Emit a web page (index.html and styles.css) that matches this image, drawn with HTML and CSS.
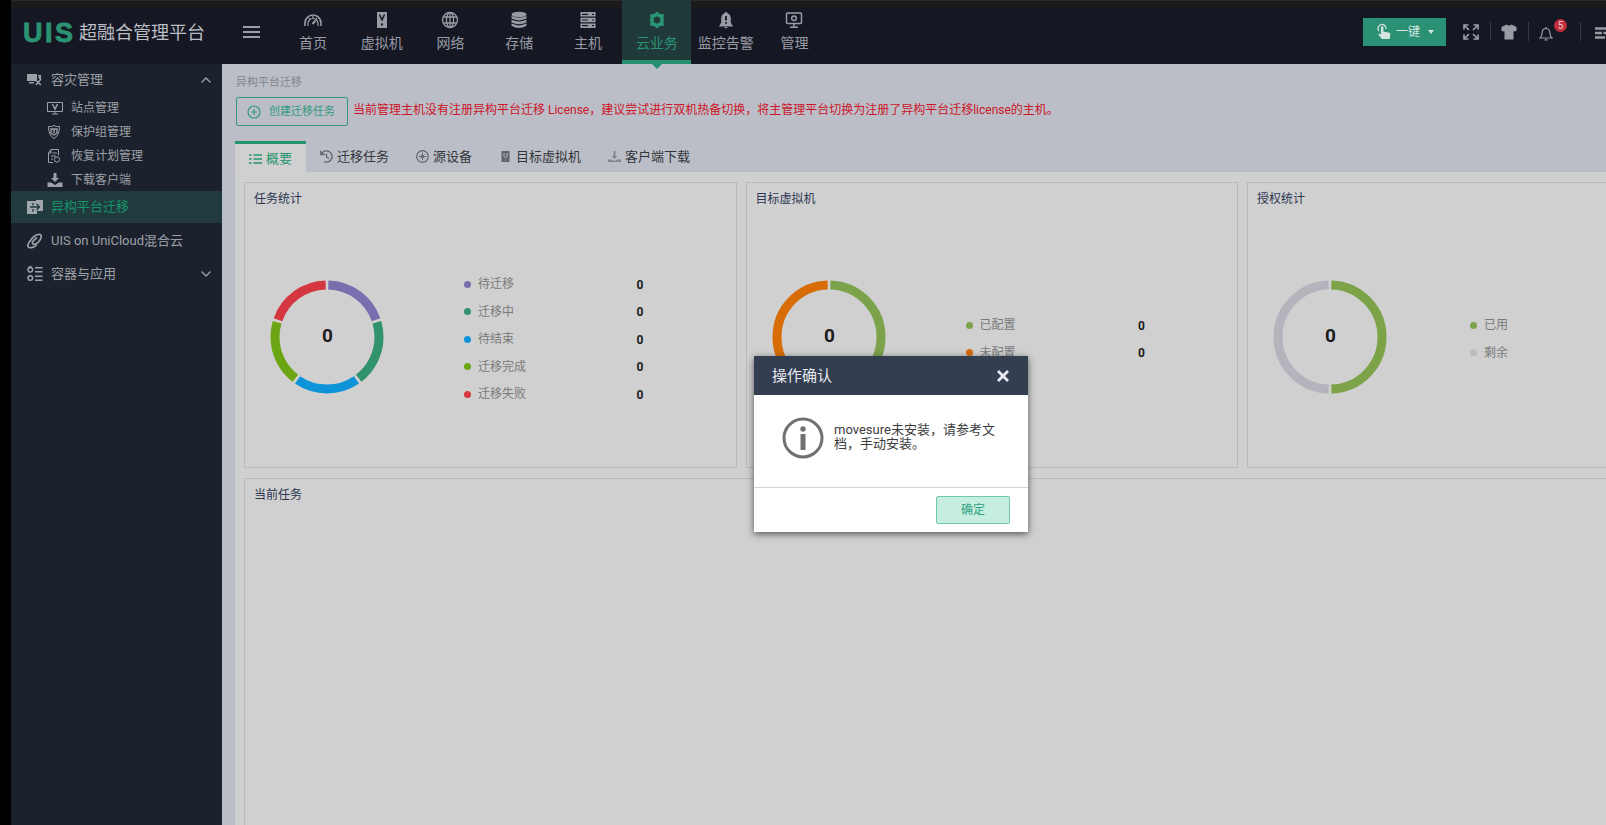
FILE: index.html
```html
<!DOCTYPE html>
<html lang="zh-CN">
<head>
    <meta charset="UTF-8">
    <meta name="viewport" content="width=device-width, initial-scale=1.0">
    <title>UIS 超融合管理平台</title>
    <link rel="stylesheet" href="styles.css">
</head>
<body>
    <header class="topbar">
        <div class="logo"><span class="logo-mark">UIS</span><span class="logo-name">超融合管理平台</span></div>
        <div class="menu-toggle"><i></i><i></i><i></i></div>
        <nav class="main-nav">
            <a class="nav-item">
                <svg width="20" height="16" viewBox="0 0 20 16" fill="none" stroke="currentColor"><path d="M2 14V11a8 8 0 0 1 16 0v3" stroke-width="1.6"/><path d="M5 14v-2.500a5 5 0 0 1 10 0V14M6 6l1.500 2M10 4v2M14 6l-1.500 2" stroke-width="1.200"/><path d="M9.500 12L12.500 8.500" stroke-width="2"/></svg>
                首页
            </a>
            <a class="nav-item">
                <svg width="16" height="18" viewBox="0 0 16 18"><path fill="currentColor" d="M3 1h10v16H3z"/><path d="M5.500 3.500L8 9l2.500-5.500" fill="none" stroke="#151823" stroke-width="1.500"/><path fill="#151823" d="M7 12.500h2v2H7z"/></svg>
                虚拟机
            </a>
            <a class="nav-item">
                <svg width="18" height="18" viewBox="0 0 18 18" fill="none" stroke="currentColor" stroke-width="1.300"><circle cx="9" cy="9" r="7.500"/><ellipse cx="9" cy="9" rx="3.600" ry="7.500"/><path d="M2.500 6h13M2.500 12h13M9 1.500v15"/></svg>
                网络
            </a>
            <a class="nav-item">
                <svg width="18" height="18" viewBox="0 0 18 18" fill="currentColor"><ellipse cx="9" cy="3.500" rx="7.500" ry="2.700"/><path d="M1.500 5q7.500 3.600 15 0v2.600q-7.500 3.600-15 0zM1.500 8.800q7.500 3.600 15 0v2.600q-7.500 3.600-15 0zM1.500 12.600q7.500 3.600 15 0v2.200q-7.500 4.400-15 0z"/></svg>
                存储
            </a>
            <a class="nav-item">
                <svg width="18" height="18" viewBox="0 0 18 18"><path fill="currentColor" d="M1.500 1h15v4.600h-15zM1.500 6.700h15v4.600h-15zM1.500 12.400h15V17h-15z"/><path stroke="#151823" stroke-width="1.200" d="M3 3.300h6M3 9h6M3 14.700h6M13 3.300h2M13 9h2M13 14.700h2"/></svg>
                主机
            </a>
            <a class="nav-item active">
                <svg width="18" height="18" viewBox="0 0 18 18"><path fill="currentColor" fill-rule="evenodd" d="M9 .5l2.600 2.300 4.400.7-.6 4L16.500 9l-1.100 1.500.6 4-4.400.7L9 17.500l-2.600-2.300-4.400-.7.600-4L1.500 9l1.100-1.500-.6-4 4.400-.7zM9 5.200L5.800 7v4L9 12.800l3.200-1.800V7z"/></svg>
                云业务
            </a>
            <a class="nav-item">
                <svg width="18" height="18" viewBox="0 0 18 18"><path fill="currentColor" d="M9 1a2 2 0 0 1 1.800 1.600C13 3.500 13.800 5.500 13.800 8v3.500l2.200 4H2l2.200-4V8c0-2.500.8-4.500 3-5.400A2 2 0 0 1 9 1zM7 16h4L9 17.500z"/><path d="M9 5v4.500M9 11v1.800" stroke="#151823" stroke-width="1.800"/></svg>
                监控告警
            </a>
            <a class="nav-item">
                <svg width="18" height="18" viewBox="0 0 18 18" fill="none" stroke="currentColor" stroke-width="1.500"><rect x="1.500" y="2" width="15" height="10.500" rx="1"/><circle cx="9" cy="7.200" r="2.300"/><path d="M9 12.500V16M5 16.200h8"/></svg>
                管理
            </a>
        </nav>
        <div class="tools">
            <button class="quick-btn">
                <svg width="14" height="17" viewBox="0 0 14 17"><path d="M2 8a4 4 0 1 1 7-2" fill="none" stroke="currentColor" stroke-width="1.300"/><path fill="currentColor" d="M4 4q1.200-1.300 2.400 0v4.500l6 1.200q1 .4.900 1.400l-.6 5H4.800L1.200 11.500q.6-1.300 2.800 0z"/></svg>
                一键
                <span class="caret"></span>
            </button>
            <svg class="tool-expand" width="16" height="16" viewBox="0 0 16 16" fill="none" stroke="currentColor" stroke-width="1.700"><path d="M1 5.500V1h4.500M10.500 1H15v4.500M15 10.500V15h-4.500M5.500 15H1v-4.500M1.500 1.500l4.500 4.500M14.500 1.500L10 6M14.500 14.500L10 10M1.500 14.500L6 10"/></svg>
            <span class="divider"></span>
            <svg class="tool-shirt" width="16" height="16" viewBox="0 0 16 16"><path fill="currentColor" d="M5.500.5q2.500 1.800 5 0L15.500 3v4L12.500 7.500V15.500h-9v-8L.5 7V3z"/></svg>
            <span class="divider"></span>
            <div class="tool-bell">
                <svg width="14" height="15" viewBox="0 0 14 15" fill="none" stroke="currentColor" stroke-width="1.200"><path d="M7 1v1.500M1 12h12q-2-1.500-2-4.500C11 4.500 9.500 2.500 7 2.500S3 4.500 3 7.500Q3 10.500 1 12zM5.500 13.800h3"/></svg>
                <span class="badge">5</span>
            </div>
            <span class="divider"></span>
            <svg class="tool-list" width="16" height="12" viewBox="0 0 16 12" stroke="currentColor" stroke-width="2.400"><path d="M0 1.500h16M0 6h7M8.500 6H16M0 10.500h10M11.500 10.500H16"/></svg>
        </div>
    </header>

    <div class="layout">
        <aside class="sidebar">
            <div class="side-item side-group">
                <svg width="16" height="14" viewBox="0 0 16 14"><path fill="currentColor" d="M0 1h10v7H0zM2 9h5v1.500H2zM11 2h3v4h-2z"/><path d="M7 6l7 6M9 12l5-6" stroke="currentColor" stroke-width="1.500"/></svg>
                容灾管理
                <svg class="chevron" width="10" height="6" viewBox="0 0 10 6" fill="none" stroke="currentColor" stroke-width="1.300"><path d="M.5 5.500L5 1l4.500 4.500"/></svg>
            </div>
            <div class="side-sub">
                <svg width="16" height="14" viewBox="0 0 16 14" fill="none" stroke="currentColor"><path d="M.5 1.500h15v9H.5zM5 13h6M8 10.500V13"/><path d="M5.500 3L8 8l2.500-5" stroke-width="1.500"/></svg>
                站点管理
            </div>
            <div class="side-sub">
                <svg width="16" height="14" viewBox="0 0 16 14" fill="none" stroke="currentColor"><path d="M1.500 1.500Q5 2 7 .5q2 1.500 5.500 1 0 9-5.500 12-5.500-3-5.500-12z"/><path d="M4 4h6v4l-3 2-3-2zM7 4v4" stroke-width="1.400"/></svg>
                保护组管理
            </div>
            <div class="side-sub">
                <svg width="16" height="14" viewBox="0 0 16 14" fill="none" stroke="currentColor"><path d="M6 13.500H1.500V4L4 .5h7.500v6M4 .5V4H1.500M5.500 4H10M4 7h5M4 10h2"/><circle cx="10" cy="10.500" r="2.600"/></svg>
                恢复计划管理
            </div>
            <div class="side-sub">
                <svg width="16" height="14" viewBox="0 0 16 14"><path fill="currentColor" d="M6.500 0h3v5H12L8 9 4 5h2.500zM.5 9.500H4L8 12l4-2.500h3.500V14H.5z"/></svg>
                下载客户端
            </div>
            <div class="side-item side-active">
                <svg width="16" height="16" viewBox="0 0 16 16"><path fill="currentColor" d="M0 2h9v-1h7v11h-6v3H0z"/><path d="M3 8h9M9.500 5l3 3-3 3M6 4v2.500M6 10v3" fill="none" stroke="#203a3d" stroke-width="1.300"/></svg>
                异构平台迁移
            </div>
            <div class="side-item side-cloud">
                <svg width="16" height="16" viewBox="0 0 16 16" fill="none" stroke="currentColor" stroke-width="1.700"><path d="M3 8.500C5 4 10 .5 13.500 1.500c2 2.500-1 8-5 9.500-3 1-4-1-2-3.500l3.500-3"/><path d="M3.500 7.500C1 10 0 13 2 14.500c3 .8 6-.8 8-3"/></svg>
                UIS on UniCloud混合云
            </div>
            <div class="side-item side-apps">
                <svg width="16" height="16" viewBox="0 0 16 16" fill="none" stroke="currentColor" stroke-width="1.500"><circle cx="3.300" cy="3.800" r="2.300"/><circle cx="3.300" cy="12" r="2.300"/><path d="M1.500 1L5 1M8 1.800h7.500M8 5.800h7.500M8 10.200h7.500M8 14.200h7.500"/></svg>
                容器与应用
                <svg class="chevron" width="10" height="6" viewBox="0 0 10 6" fill="none" stroke="currentColor" stroke-width="1.300"><path d="M.5.5L5 5 9.500.5"/></svg>
            </div>
        </aside>

        <main class="content">
            <div class="breadcrumb">异构平台迁移</div>
            <div class="actions">
                <button class="create-btn">
                    <svg width="14" height="14" viewBox="0 0 14 14" fill="none" stroke="currentColor" stroke-width="1.200"><circle cx="7" cy="7" r="6"/><path d="M7 4v6M4 7h6"/></svg>
                    创建迁移任务
                </button>
                <span class="warning">当前管理主机没有注册异构平台迁移 License，建议尝试进行双机热备切换，将主管理平台切换为注册了异构平台迁移license的主机。</span>
            </div>

            <div class="tabs">
                <a class="tab active">
                    <svg width="13" height="12" viewBox="0 0 13 12" fill="none" stroke="currentColor" stroke-width="1.400"><path d="M0 2h2.500M4.500 2H13M0 6h2.500M4.500 6H13M0 10h2.500M4.500 10H13"/></svg>
                    概要
                </a>
                <a class="tab tab-tasks">
                    <svg width="13" height="13" viewBox="0 0 13 13" fill="none" stroke="currentColor" stroke-width="1.300"><path d="M1.500 4A5.600 5.600 0 1 1 4 11.500M.8.500v4h4M6.500 3.500V7L9 8.500"/></svg>
                    迁移任务
                </a>
                <a class="tab tab-source">
                    <svg width="13" height="13" viewBox="0 0 13 13" fill="none" stroke="currentColor" stroke-width="1.200"><circle cx="6.500" cy="6.500" r="5.800"/><path d="M6.500 2.500v8M2.500 6.500h8M4.500 4.500l4 4M8.500 4.500l-4 4" stroke-width=".9"/></svg>
                    源设备
                </a>
                <a class="tab tab-target">
                    <svg width="9" height="13" viewBox="0 0 9 13"><path fill="currentColor" d="M.5 1h8v11h-8z"/><path d="M3 3v3.500L4.500 8 6 6.500V3M4 10h1" fill="none" stroke="#bbbec7"/></svg>
                    目标虚拟机
                </a>
                <a class="tab tab-client">
                    <svg width="13" height="13" viewBox="0 0 13 13" fill="#85878d"><path d="M5.500 1h2v5h2l-3 3-3-3h2zM0 9.500h3.500L6.500 11l3-1.500H13V12H0z"/></svg>
                    客户端下载
                </a>
            </div>

            <div class="board">
                <div class="cards">
                    <section class="card">
                        <h2>任务统计</h2>
                        <div class="stat">
                            <svg class="donut" viewBox="0 0 114 114">
                                <circle class="seg" cx="57" cy="57" r="52" pathLength="360" stroke="#7a6eae" stroke-dasharray="69 291" stroke-dashoffset="-1.5"/>
                                <circle class="seg" cx="57" cy="57" r="52" pathLength="360" stroke="#30936c" stroke-dasharray="69 291" stroke-dashoffset="-73.5"/>
                                <circle class="seg" cx="57" cy="57" r="52" pathLength="360" stroke="#0d94d8" stroke-dasharray="69 291" stroke-dashoffset="-145.5"/>
                                <circle class="seg" cx="57" cy="57" r="52" pathLength="360" stroke="#6ca514" stroke-dasharray="69 291" stroke-dashoffset="-217.5"/>
                                <circle class="seg" cx="57" cy="57" r="52" pathLength="360" stroke="#d4373f" stroke-dasharray="69 291" stroke-dashoffset="-289.5"/>
                                <text x="57.500" y="62">0</text>
                            </svg>
                            <ul class="legend">
                                <li><i class="dot purple"></i>待迁移<b>0</b></li>
                                <li><i class="dot green"></i>迁移中<b>0</b></li>
                                <li><i class="dot blue"></i>待结束<b>0</b></li>
                                <li><i class="dot lime"></i>迁移完成<b>0</b></li>
                                <li><i class="dot red"></i>迁移失败<b>0</b></li>
                            </ul>
                        </div>
                    </section>
                    <section class="card">
                        <h2>目标虚拟机</h2>
                        <div class="stat">
                            <svg class="donut" viewBox="0 0 114 114">
                                <circle class="seg" cx="57" cy="57" r="52" pathLength="360" stroke="#7ca34c" stroke-dasharray="177 183" stroke-dashoffset="-1.5"/>
                                <circle class="seg" cx="57" cy="57" r="52" pathLength="360" stroke="#d86c07" stroke-dasharray="177 183" stroke-dashoffset="-181.5"/>
                                <text x="57.500" y="62">0</text>
                            </svg>
                            <ul class="legend">
                                <li><i class="dot olive"></i>已配置<b>0</b></li>
                                <li><i class="dot orange"></i>未配置<b>0</b></li>
                            </ul>
                        </div>
                    </section>
                    <section class="card">
                        <h2>授权统计</h2>
                        <div class="stat">
                            <svg class="donut" viewBox="0 0 114 114">
                                <circle class="seg" cx="57" cy="57" r="52" pathLength="360" stroke="#7ca347" stroke-dasharray="177 183" stroke-dashoffset="-1.5"/>
                                <circle class="seg" cx="57" cy="57" r="52" pathLength="360" stroke="#b5b4bd" stroke-dasharray="177 183" stroke-dashoffset="-181.5"/>
                                <text x="57.500" y="62">0</text>
                            </svg>
                            <ul class="legend legend-license">
                                <li><i class="dot olive"></i>已用</li>
                                <li><i class="dot grey"></i>剩余</li>
                            </ul>
                        </div>
                    </section>
                </div>
                <section class="card current">
                    <h2>当前任务</h2>
                </section>
            </div>
        </main>
    </div>

    <div class="dialog">
        <div class="dialog-head">
            操作确认
            <svg width="12" height="12" viewBox="0 0 12 12" stroke="#e9edf6" stroke-width="2.800"><path d="M1 1l10 10M11 1L1 11"/></svg>
        </div>
        <div class="dialog-body">
            <svg width="42" height="42" viewBox="0 0 42 42"><circle cx="21" cy="21" r="19" fill="none" stroke="#717171" stroke-width="3"/><circle cx="21" cy="12" r="2.700" fill="#717171"/><path fill="#717171" d="M18.500 17h5v16h-5z"/></svg>
            <p>movesure未安装，请参考文档，手动安装。</p>
        </div>
        <div class="dialog-foot">
            <button class="ok-btn">确定</button>
        </div>
    </div>
</body>
</html>
```
FILE: styles.css
```css
/* General Styles */
* {
    box-sizing: border-box;
}

body {
    margin: 0;
    height: 825px;
    overflow: hidden;
    padding-left: 11px;
    background: #000;
    font-family: Roboto, "Noto Sans CJK SC", sans-serif;
    font-size: 12px;
    line-height: 18px;
    display: flex;
    flex-direction: column;
}

button {
    font-family: inherit;
    line-height: 18px;
    padding: 0;
    display: flex;
    align-items: center;
}

svg {
    flex: none;
    display: block;
}

/* Top bar */
.topbar {
    height: 64px;
    flex: none;
    display: flex;
    background: linear-gradient(#2b2b2b 1px, #1b1b1b 1px, #1b1b1c 7px, #151823 9px);
    color: #9a9ba5;
}

.logo {
    width: 232px;
    display: flex;
    align-items: center;
    padding: 1px 0 0 12px;
}

.logo-mark {
    width: 56px;
    padding-top: 2px;
    font: bold 27px/1 "Liberation Sans", sans-serif;
    letter-spacing: 2.500px;
    color: #2b9272;
    -webkit-text-stroke: 0.8px #2b9272;
}

.logo-name {
    font-size: 18px;
    color: #bcbec6;
    white-space: nowrap;
}

.menu-toggle {
    width: 16.500px;
    margin-right: 19px;
    padding-top: 26px;
    display: flex;
    flex-direction: column;
    gap: 3px;
}

.menu-toggle i {
    height: 2px;
    background: #9c9da6;
}

.main-nav {
    display: flex;
}

.nav-item {
    width: 68.800px;
    display: flex;
    flex-direction: column;
    align-items: center;
    padding-top: 11px;
    font-size: 14px;
    line-height: 18px;
    gap: 5px;
    white-space: nowrap;
}

.nav-item svg {
    height: 18px;
}

.nav-item.active {
    position: relative;
    color: #2b9474;
    background: #203a3a;
    border-bottom: 4px solid #24906f;
}

.nav-item.active::after {
    content: "";
    position: absolute;
    top: 63px;
    border: 6px solid transparent;
    border-top-color: #24906f;
    border-bottom: 0;
}

.tools {
    flex: 1;
    display: flex;
    align-items: center;
    justify-content: flex-end;
    overflow: hidden;
    padding-bottom: 1px;
}

.quick-btn {
    width: 83px;
    height: 28px;
    padding-left: 14px;
    gap: 5px;
    border: 0;
    background: #2a9174;
    color: #d5e6e0;
    font-size: 12px;
    margin-right: 17px;
}

.caret {
    border: 3.500px solid transparent;
    border-top: 4px solid #d5e6e0;
    border-bottom: 0;
    margin-left: 3px;
}

.divider {
    width: 1px;
    height: 19px;
    background: #373943;
}

.tool-expand {
    margin-right: 11px;
}

.tool-shirt {
    margin: 0 11px 0 10px;
}

.tool-bell {
    position: relative;
    width: 14px;
    margin: 3px 27px 0 10px;
}

.badge {
    position: absolute;
    left: 15px;
    top: -7px;
    width: 13px;
    height: 13px;
    border-radius: 50%;
    background: #c32e3c;
    color: #e8c9cd;
    font-size: 10px;
    line-height: 13px;
    text-align: center;
}

.tool-list {
    margin: 2px -5px 0 14px;
}

/* Sidebar */
.layout {
    flex: 1;
    display: flex;
    min-height: 0;
}

.sidebar {
    width: 211px;
    flex: none;
    background: #1c222d;
    color: #9ca0a7;
    font-size: 12px;
}

.side-item {
    display: flex;
    align-items: center;
    gap: 8px;
    height: 32px;
    padding-left: 16px;
    font-size: 13px;
}

.side-item .chevron {
    margin-left: auto;
    margin-right: 11px;
}

.side-group {
    height: 31px;
    padding-top: 1px;
}

.side-sub {
    display: flex;
    align-items: center;
    gap: 8px;
    height: 24px;
    padding: 1px 0 0 36px;
}

.side-active {
    margin-bottom: 1px;
    background: #203a3d;
    color: #16956a;
}

.side-active svg {
    color: #a0a6ab;
}

.side-cloud,
.side-apps {
    height: 33px;
}

/* Content */
.content {
    flex: 1;
    min-width: 0;
    overflow: hidden;
    display: flex;
    flex-direction: column;
    padding: 11px 0 0 13px;
    background: #bbbec7;
}

.breadcrumb {
    height: 22px;
    padding-left: 1px;
    font-size: 11px;
    line-height: 16px;
    color: #82858c;
}

.actions {
    display: flex;
    align-items: center;
    height: 29px;
    padding-left: 1px;
    gap: 5px;
}

.create-btn {
    width: 112px;
    height: 29px;
    padding-left: 10px;
    gap: 8px;
    border: 1px solid #359882;
    border-radius: 2px;
    background: none;
    color: #319a80;
    font-size: 11px;
}

.warning {
    color: #cc1528;
    white-space: nowrap;
    padding-bottom: 3px;
}

.tabs {
    display: flex;
    height: 31px;
    margin-top: 15px;
    font-size: 13px;
    color: #33363b;
    white-space: nowrap;
}

.tab {
    display: flex;
    align-items: center;
    gap: 4px;
}

.tab svg {
    color: #606369;
}

.tab.active {
    width: 71px;
    padding: 1px 0 0 14px;
    border-top: 3px solid #24946f;
    background: #d0d0d1;
    color: #27956f;
}

.tab.active svg {
    color: #27956f;
}

.tab-tasks {
    margin-left: 14px;
}

.tab-source {
    margin-left: 27px;
}

.tab-target {
    margin-left: 29px;
    gap: 6px;
}

.tab-client {
    margin-left: 27px;
}

/* Statistics board */
.board {
    flex: 1;
    min-height: 0;
    display: flex;
    flex-direction: column;
    gap: 10px;
    padding: 10px 0 0 9px;
    background: #cfd0d0;
}

.cards {
    display: flex;
    gap: 9px;
}

.card {
    width: 492.500px;
    height: 286px;
    flex: none;
    border: 1px solid #bababa;
    background: #d0d0d0;
}

.card h2 {
    margin: 7px 0 0 9px;
    font-size: 12px;
    font-weight: normal;
    line-height: 18px;
    color: #2c3550;
}

.card.current {
    width: auto;
    height: auto;
    flex: 1;
    border-bottom: 0;
    border-right: 0;
}

.stat {
    display: flex;
    align-items: center;
    height: 138px;
    margin-top: 62px;
    padding: 0 0 0 25px;
}

.donut {
    width: 114px;
    height: 114px;
    margin-bottom: 5px;
}

.donut .seg {
    fill: none;
    stroke-width: 9;
    transform: rotate(-90deg);
    transform-origin: center;
}

.donut text {
    font: bold 19px "Roboto", sans-serif;
    text-anchor: middle;
    fill: #1c1c1c;
}

.legend {
    list-style: none;
    margin: 0 0 0 79px;
    padding: 0;
    width: 182px;
    color: #7a7a7a;
}

.legend-license {
    margin-left: 82px;
}

.legend li {
    display: flex;
    align-items: center;
    height: 27.500px;
}

.legend b {
    width: 10px;
    margin-left: auto;
    padding-top: 1px;
    text-align: center;
    color: #1c1c1c;
}

.dot {
    width: 7px;
    height: 7px;
    margin: 0 7px 0 1px;
    border-radius: 50%;
}

.purple { background: #7a6eae; }
.green { background: #30936c; }
.blue { background: #0d94d8; }
.lime { background: #6ca514; }
.red { background: #d4373f; }
.olive { background: #7ca34c; }
.orange { background: #d86c07; }
.grey { background: #bbbbbd; }

/* Dialog */
.dialog {
    position: absolute;
    left: 754px;
    top: 356px;
    width: 274px;
    height: 176px;
    display: flex;
    flex-direction: column;
    background: #fff;
    box-shadow: 0 2px 7px rgba(0, 0, 0, 0.6);
}

.dialog-head {
    height: 39px;
    display: flex;
    align-items: center;
    justify-content: space-between;
    padding: 0 19px 0 18px;
    background: #343e51;
    color: #e9edf2;
    font-size: 15px;
}

.dialog-body {
    flex: 1;
    display: flex;
    padding: 22px 30px 0 28px;
    gap: 10px;
}

.dialog-body p {
    margin: 6px 0 0;
    width: 164px;
    font-size: 13px;
    line-height: 14px;
    color: #3c3c3c;
}

.dialog-foot {
    height: 45px;
    border-top: 1px solid #d5d5d5;
    display: flex;
    justify-content: flex-end;
    padding: 8px 18px 0 0;
}

.ok-btn {
    width: 74px;
    height: 28px;
    justify-content: center;
    border: 1px solid #72c8aa;
    border-radius: 2px;
    background: #c6eee0;
    color: #2fa37e;
    font-size: 12px;
}
```
